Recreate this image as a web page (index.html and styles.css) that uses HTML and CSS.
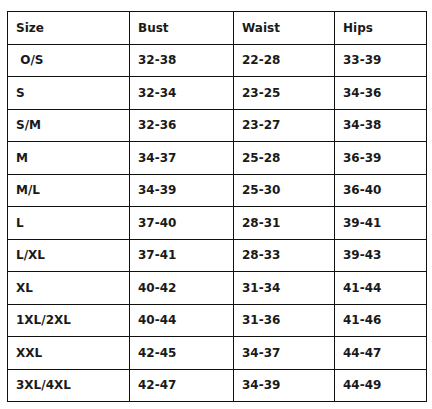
FILE: index.html
```html
<!DOCTYPE html>
<html>
<head>
<meta charset="utf-8">
<link rel="stylesheet" href="styles.css">
</head>
<body>
<div class="wrap">
<table class="sizes">
<colgroup>
<col class="c1"><col class="c2"><col class="c3"><col class="c4">
</colgroup>
<tr><td>Size</td><td>Bust</td><td>Waist</td><td>Hips</td></tr>
<tr><td>&nbsp;O/S</td><td>32-38</td><td>22-28</td><td>33-39</td></tr>
<tr><td>S</td><td>32-34</td><td>23-25</td><td>34-36</td></tr>
<tr><td>S/M</td><td>32-36</td><td>23-27</td><td>34-38</td></tr>
<tr><td>M</td><td>34-37</td><td>25-28</td><td>36-39</td></tr>
<tr><td>M/L</td><td>34-39</td><td>25-30</td><td>36-40</td></tr>
<tr><td>L</td><td>37-40</td><td>28-31</td><td>39-41</td></tr>
<tr><td>L/XL</td><td>37-41</td><td>28-33</td><td>39-43</td></tr>
<tr><td>XL</td><td>40-42</td><td>31-34</td><td>41-44</td></tr>
<tr><td>1XL/2XL</td><td>40-44</td><td>31-36</td><td>41-46</td></tr>
<tr><td>XXL</td><td>42-45</td><td>34-37</td><td>44-47</td></tr>
<tr><td>3XL/4XL</td><td>42-47</td><td>34-39</td><td>44-49</td></tr>
</table>
</div>
</body>
</html>
```
FILE: styles.css
```css
html, body {
  margin: 0;
  padding: 0;
  background: #fff;
}
.wrap {
  padding: 11px 0 0 7px;
}
.sizes {
  border-collapse: collapse;
  table-layout: fixed;
  width: 419px;
  font-family: "DejaVu Sans", "Liberation Sans", sans-serif;
  font-weight: 700;
  font-size: 12px;
  color: #1a1a1a;
}
.c1 { width: 122px; }
.c2 { width: 104px; }
.c3 { width: 101px; }
.c4 { width: 92px; }
.sizes td {
  border: 1px solid #111;
  height: 32.5px;
  padding: 0 8px;
  box-sizing: border-box;
  vertical-align: middle;
  white-space: pre;
}
```
